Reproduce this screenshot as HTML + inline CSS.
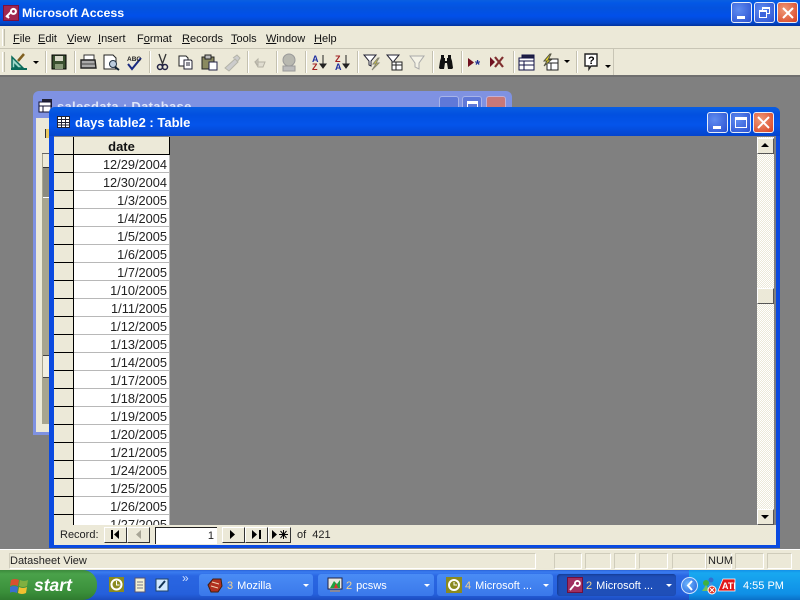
<!DOCTYPE html>
<html><head><meta charset="utf-8"><style>
*{box-sizing:border-box}
html,body{margin:0;padding:0;width:800px;height:600px;overflow:hidden;background:#808080;font-family:"Liberation Sans",sans-serif;font-size:11.5px;color:#000}
.a{position:absolute}
#tb{left:0;top:0;width:800px;height:26px;background:linear-gradient(#0a5fe0 0,#0358e6 3px,#0453dd 8px,#0150ea 16px,#0346c8 23px,#02329c 26px)}
.tt{color:#fff;font-weight:bold;white-space:nowrap}
.wb{border:1px solid #e8eef8;border-radius:3px;background:radial-gradient(circle at 35% 35%,#5f8cf0,#2a50d0)}
.wb.r{background:radial-gradient(circle at 35% 35%,#ef9a78,#d84020)}
.m{top:33px;white-space:nowrap;font-size:11px;color:#111}
.m u{text-decoration:underline}
.sep{background:#c4c1b0;border-right:1px solid #fff;width:2px;top:51px;height:22px}
.row{left:54px;width:116px;height:18px}
.sel{position:absolute;left:0;top:0;width:20px;height:18px;background:#ece9d8;border-bottom:1px solid #000;border-right:1px solid #000}
.cell{position:absolute;left:20px;top:0;width:96px;height:18px;background:#fff;border-bottom:1px solid #b8b8b8;border-right:1px solid #b8b8b8;text-align:right;padding-right:2px;line-height:20px;font-size:12.8px;color:#222;overflow:hidden}
.nb{top:527px;height:16px;width:23px;background:#ece9d8;border-bottom:1px solid #333;border-right:1px solid #333;border-top:1px solid #fff;border-left:1px solid #fff}
.sb{top:553px;height:16px;border:1px solid #cfccbb;border-right-color:#fff;border-bottom-color:#fff}
.tk{top:574px;height:22px;border-radius:3px;background:linear-gradient(#4a8cf5,#3a78ea);color:#fff;font-size:11px;line-height:24px;white-space:nowrap}
.tk span{position:absolute;left:28px}
.tk b{font-weight:normal;color:#f0d090;margin-right:1px}
.tk i{position:absolute;right:4px;top:10px;width:0;height:0;border:3px solid transparent;border-top:3px solid #fff;border-bottom:0}
</style></head><body>

<div class="a" id="tb"></div>
<svg class="a" style="left:3px;top:5px" width="16" height="16"><rect width="16" height="16" fill="#7a1040"/><rect x="1" y="1" width="14" height="14" fill="#a02850"/><path d="M3 12l5-5M8 7a2.500 2.500 0 1 0 3-3 2.500 2.500 0 0 0-3 3M4 11l2 2" stroke="#fff" stroke-width="2" fill="none"/></svg>
<div class="a tt" style="left:22px;top:5px;font-size:12.4px;line-height:16px">Microsoft Access</div>
<div class="a wb" style="left:731px;top:2px;width:21px;height:21px"><div class="a" style="left:5px;top:13px;width:8px;height:3px;background:#fff"></div></div>
<div class="a wb" style="left:754px;top:2px;width:21px;height:21px"><div class="a" style="left:7px;top:4px;width:8px;height:7px;border:1px solid #fff;border-top-width:2px"></div><div class="a" style="left:4px;top:7px;width:8px;height:8px;border:1px solid #fff;border-top-width:2px;background:#3d66dc"></div></div>
<div class="a wb r" style="left:777px;top:2px;width:21px;height:21px"><svg class="a" style="left:4px;top:4px" width="12" height="12"><path d="M1 1l10 10M11 1L1 11" stroke="#fff" stroke-width="2"/></svg></div>

<div class="a" style="left:0;top:26px;width:800px;height:49px;background:#ece9d8"></div>
<div class="a" style="left:0;top:48px;width:800px;height:1px;background:#c8c5b5"></div>
<div class="a" style="left:2px;top:29px;width:3px;height:17px;border-left:1px solid #fff;border-right:1px solid #c0bdac;background:#e4e1d0"></div>
<div class="a m" style="left:13px"><u>F</u>ile</div>
<div class="a m" style="left:38px"><u>E</u>dit</div>
<div class="a m" style="left:67px"><u>V</u>iew</div>
<div class="a m" style="left:98px"><u>I</u>nsert</div>
<div class="a m" style="left:137px">F<u>o</u>rmat</div>
<div class="a m" style="left:182px"><u>R</u>ecords</div>
<div class="a m" style="left:231px"><u>T</u>ools</div>
<div class="a m" style="left:266px"><u>W</u>indow</div>
<div class="a m" style="left:314px"><u>H</u>elp</div>

<!-- toolbar -->
<div class="a" style="left:0;top:49px;width:614px;height:26px;background:#ece9d8;border-right:1px solid #c8c5b5"></div>
<div class="a" style="left:0;top:75px;width:800px;height:2px;background:#6f6f6f"></div>
<div class="a" style="left:2px;top:52px;width:3px;height:20px;border-left:1px solid #fff;border-right:1px solid #c0bdac"></div>
<div class="a sep" style="left:45px"></div><div class="a sep" style="left:74px"></div><div class="a sep" style="left:149px"></div><div class="a sep" style="left:247px"></div><div class="a sep" style="left:276px"></div><div class="a sep" style="left:305px"></div><div class="a sep" style="left:357px"></div><div class="a sep" style="left:432px"></div><div class="a sep" style="left:461px"></div><div class="a sep" style="left:513px"></div><div class="a sep" style="left:576px"></div>
<svg class="a" style="left:0;top:49px" width="620" height="26" fill="none">
 <!-- design -->
 <path d="M12 19V8l11 11z M15 16v2h2z" stroke="#0a6a5a" stroke-width="1.500" fill="#9fd8c8"/><path d="M11 20h16" stroke="#0a6a5a" stroke-width="2"/><path d="M18 12l6-7" stroke="#806020" stroke-width="2.500"/>
 <path d="M33 12h6l-3 3z" fill="#000"/>
 <!-- save -->
 <rect x="52" y="6" width="14" height="14" fill="#3a5030" stroke="#000"/><rect x="55" y="7" width="8" height="5" fill="#d8d8c8"/><rect x="55" y="15" width="8" height="5" fill="#889878"/>
 <!-- print -->
 <path d="M84 6h10v5H84z" fill="#fff" stroke="#333"/><path d="M81 11h14l1 8H81z" fill="#aaa" stroke="#222" stroke-width="1.400"/><path d="M82 15h13" stroke="#444"/>
 <!-- preview -->
 <path d="M104 6h9l3 3v11h-12z" fill="#fff" stroke="#222"/><circle cx="113" cy="15" r="3.500" fill="#bcd" stroke="#234"/><path d="M115 18l4 3" stroke="#123" stroke-width="2"/>
 <!-- spell -->
 <path d="M128 15l4 5 9-11" stroke="#1a2a80" stroke-width="2"/>
 <text x="127" y="12" font-family="Liberation Sans" font-size="6.500" font-weight="bold" fill="#222">ABC</text>
 <!-- cut -->
 <path d="M159 5l4 11M166 5l-4 11" stroke="#333" stroke-width="1.300"/><circle cx="160" cy="18" r="2.500" stroke="#224" stroke-width="1.500"/><circle cx="165" cy="18" r="2.500" stroke="#224" stroke-width="1.500"/>
 <!-- copy -->
 <path d="M179 7h7l2 2v8h-9z" fill="#fff" stroke="#222"/><path d="M184 11h7l1 1v8h-8z" fill="#fff" stroke="#223"/><path d="M186 14h4M186 16h4" stroke="#223"/>
 <!-- paste -->
 <rect x="202" y="8" width="12" height="12" fill="#8a8a60" stroke="#222"/><rect x="205" y="6" width="6" height="4" fill="#bbb" stroke="#222"/><rect x="209" y="13" width="8" height="8" fill="#fff" stroke="#224"/>
 <!-- painter -->
 <path d="M225 19l10-9 3 3-9 9zM233 9l4-3 3 3-3 4" fill="#ccc" stroke="#b4b4a8"/>
 <!-- undo -->
 <path d="M255 13h10l-2 5h-5zM255 13l3-3v6z" fill="#e0ddd0" stroke="#b4b1a4"/>
 <!-- web -->
 <circle cx="289" cy="11" r="6" fill="#b8b8b0" stroke="#999"/><path d="M283 17h12v5h-12z" fill="#bbb" stroke="#999"/>
 <!-- AZ -->
 <text x="312" y="13" font-family="Liberation Sans" font-size="9" font-weight="bold" fill="#2030a0">A</text><text x="312" y="21" font-family="Liberation Sans" font-size="9" font-weight="bold" fill="#a02020">Z</text><path d="M323 6v12M320 15l3 4 3-4z" stroke="#222" fill="#222"/>
 <text x="335" y="13" font-family="Liberation Sans" font-size="9" font-weight="bold" fill="#a02020">Z</text><text x="335" y="21" font-family="Liberation Sans" font-size="9" font-weight="bold" fill="#2030a0">A</text><path d="M346 6v12M343 15l3 4 3-4z" stroke="#222" fill="#222"/>
 <!-- filters -->
 <path d="M364 6h12l-5 6v5l-2-1v-4z" fill="#fff" stroke="#223"/><path d="M378 9l-5 6h3l-4 6 7-7h-3l3-5z" fill="#f0e020" stroke="#887"/>
 <path d="M387 6h12l-5 6v3h-2v-3z" fill="#fff" stroke="#223"/><rect x="392" y="13" width="10" height="8" fill="#fff" stroke="#222"/><path d="M392 16h10M396 13v8" stroke="#222"/>
 <path d="M410 7h14l-5 7v6l-4-2v-4z" fill="#f4f2e6" stroke="#aaa"/>
 <!-- find -->
 <path d="M441 6h3v3h1v3h2V9h1V6h3v3l1 3 1 7-1 1h-4l-1-6h-2l-1 6h-4l-1-1 1-7 1-3z" fill="#111"/>
 <!-- new rec -->
 <path d="M468 9l6 4.500-6 4.500z" fill="#701020"/><text x="475" y="20" font-family="Liberation Sans" font-size="13" font-weight="bold" fill="#1a2a90">*</text>
 <path d="M490 8l5 5-5 5z" fill="#701020"/><path d="M495 8l8 10M503 8l-8 10" stroke="#803030" stroke-width="2.200"/>
 <!-- db win -->
 <rect x="522" y="6" width="12" height="8" fill="#224" stroke="#114"/><rect x="519" y="9" width="15" height="12" fill="#fff" stroke="#114"/><path d="M519 12h15M524 12v9M519 16h15" stroke="#114"/>
 <!-- new obj -->
 <rect x="547" y="10" width="11" height="11" fill="#fff" stroke="#222"/><path d="M547 14h11M551 14v7" stroke="#222"/><path d="M550 5l-6 7h3l-3 5 7-6h-3l3-6z" fill="#f4e020" stroke="#554"/>
 <path d="M564 11h6l-3 3z" fill="#000"/>
 <!-- help -->
 <path d="M585 5h12v12h-6l-2 3v-3h-4z" fill="#fff" stroke="#222" stroke-width="1.400"/>
 <text x="588" y="15" font-family="Liberation Sans" font-size="11" font-weight="bold" fill="#000">?</text>
 <path d="M605 16h6l-3 3z" fill="#000"/>
</svg>

<!-- back window -->
<div class="a" style="left:33px;top:91px;width:479px;height:344px;background:#7f92e2;border-radius:6px 6px 0 0"></div>
<div class="a" style="left:36px;top:118px;width:16px;height:314px;background:#ece9d8"></div>
<div class="a" style="left:42px;top:153px;width:8px;height:271px;background:#a8a590"></div>
<div class="a" style="left:42px;top:153px;width:8px;height:1px;background:#666"></div>
<div class="a" style="left:43px;top:154px;width:7px;height:13px;background:#ece9d8"></div>
<div class="a" style="left:43px;top:167px;width:6px;height:31px;background:#8b8b80;border-top:1px solid #333;border-bottom:1px solid #fff"></div>
<div class="a" style="left:43px;top:355px;width:7px;height:1px;background:#444"></div>
<div class="a" style="left:43px;top:356px;width:7px;height:21px;background:#f0eee0"></div>
<div class="a" style="left:43px;top:377px;width:7px;height:1px;background:#444"></div>
<div class="a" style="left:45px;top:129px;width:5px;height:9px;background:#e8c860;border-left:1px solid #333"></div>
<svg class="a" style="left:38px;top:98px" width="16" height="16"><rect x="4" y="1" width="10" height="8" fill="#223"/><rect x="1" y="4" width="12" height="10" fill="#fff" stroke="#113"/><path d="M1 8h12M5 8v6" stroke="#113"/></svg>
<div class="a tt" style="left:57px;top:99px;font-size:13px;line-height:16px;color:#dfe6fa;letter-spacing:.3px">salesdata : Database</div>
<div class="a wb" style="left:439px;top:96px;width:20px;height:20px;background:#5f78d8;border-color:#a8b4e8"></div>
<div class="a wb" style="left:462px;top:96px;width:20px;height:20px;background:#5f78d8;border-color:#a8b4e8"><div class="a" style="left:4px;top:4px;width:11px;height:11px;border:1px solid #fff;border-top-width:3px"></div></div>
<div class="a wb" style="left:486px;top:96px;width:20px;height:20px;background:#c87878;border-color:#c0b0d8"></div>

<!-- front window -->
<div class="a" style="left:49px;top:107px;width:731px;height:441px;background:#0a4ae0;border-radius:6px 6px 0 0"></div>
<div class="a" style="left:49px;top:107px;width:731px;height:29px;border-radius:6px 6px 0 0;background:linear-gradient(#0a5ee2 0,#0250e0 8px,#0454ea 18px,#0444cc 29px)"></div>
<svg class="a" style="left:57px;top:116px" width="13" height="13"><rect x=".5" y=".5" width="12" height="11" fill="#fff" stroke="#223"/><path d="M.5 3.500h12M.5 6.500h12M.5 9h12M4.500 .5v11M8.500 .5v11" stroke="#223"/></svg>
<div class="a tt" style="left:75px;top:115px;font-size:13px;line-height:16px">days table2 : Table</div>
<div class="a wb" style="left:707px;top:112px;width:21px;height:21px"><div class="a" style="left:5px;top:13px;width:8px;height:3px;background:#fff"></div></div>
<div class="a wb" style="left:730px;top:112px;width:21px;height:21px"><div class="a" style="left:4px;top:4px;width:12px;height:11px;border:1px solid #fff;border-top-width:3px"></div></div>
<div class="a wb r" style="left:753px;top:112px;width:21px;height:21px"><svg class="a" style="left:3px;top:3px" width="13" height="13"><path d="M1 1l11 11M12 1L1 12" stroke="#fff" stroke-width="2"/></svg></div>

<div class="a" style="left:54px;top:136px;width:722px;height:409px;background:#808080"></div>
<div class="a" style="left:54px;top:137px;width:20px;height:18px;background:#ece9d8;border-bottom:1px solid #000;border-right:1px solid #000"></div>
<div class="a" style="left:74px;top:137px;width:96px;height:18px;background:#ece9d8;border-bottom:1px solid #000;border-right:1px solid #000;text-align:center;font-weight:bold;font-size:13px;line-height:19px;color:#111">date</div>

<div class="a row" style="top:155px"><div class="sel"></div><div class="cell">12/29/2004</div></div>
<div class="a row" style="top:173px"><div class="sel"></div><div class="cell">12/30/2004</div></div>
<div class="a row" style="top:191px"><div class="sel"></div><div class="cell">1/3/2005</div></div>
<div class="a row" style="top:209px"><div class="sel"></div><div class="cell">1/4/2005</div></div>
<div class="a row" style="top:227px"><div class="sel"></div><div class="cell">1/5/2005</div></div>
<div class="a row" style="top:245px"><div class="sel"></div><div class="cell">1/6/2005</div></div>
<div class="a row" style="top:263px"><div class="sel"></div><div class="cell">1/7/2005</div></div>
<div class="a row" style="top:281px"><div class="sel"></div><div class="cell">1/10/2005</div></div>
<div class="a row" style="top:299px"><div class="sel"></div><div class="cell">1/11/2005</div></div>
<div class="a row" style="top:317px"><div class="sel"></div><div class="cell">1/12/2005</div></div>
<div class="a row" style="top:335px"><div class="sel"></div><div class="cell">1/13/2005</div></div>
<div class="a row" style="top:353px"><div class="sel"></div><div class="cell">1/14/2005</div></div>
<div class="a row" style="top:371px"><div class="sel"></div><div class="cell">1/17/2005</div></div>
<div class="a row" style="top:389px"><div class="sel"></div><div class="cell">1/18/2005</div></div>
<div class="a row" style="top:407px"><div class="sel"></div><div class="cell">1/19/2005</div></div>
<div class="a row" style="top:425px"><div class="sel"></div><div class="cell">1/20/2005</div></div>
<div class="a row" style="top:443px"><div class="sel"></div><div class="cell">1/21/2005</div></div>
<div class="a row" style="top:461px"><div class="sel"></div><div class="cell">1/24/2005</div></div>
<div class="a row" style="top:479px"><div class="sel"></div><div class="cell">1/25/2005</div></div>
<div class="a row" style="top:497px"><div class="sel"></div><div class="cell">1/26/2005</div></div>
<div class="a" style="left:54px;top:515px;width:116px;height:10px;overflow:hidden"><div class="sel"></div><div class="cell">1/27/2005</div></div>

<!-- scrollbar -->
<div class="a" style="left:757px;top:137px;width:17px;height:388px;background-color:#f4f2ea;background-image:repeating-conic-gradient(#ece9d8 0 25%,#fff 0 50%);background-size:2px 2px"></div>
<div class="a" style="left:757px;top:138px;width:17px;height:16px;background:#ece9d8;border:1px solid;border-color:#fff #555 #555 #fff"><div class="a" style="left:3px;top:4px;border:4px solid transparent;border-top:0;border-bottom:4px solid #000;width:0;height:0"></div></div>
<div class="a" style="left:757px;top:288px;width:17px;height:16px;background:#ece9d8;border:1px solid;border-color:#fff #555 #555 #fff"></div>
<div class="a" style="left:757px;top:509px;width:17px;height:16px;background:#ece9d8;border:1px solid;border-color:#fff #555 #555 #fff"><div class="a" style="left:3px;top:5px;border:4px solid transparent;border-bottom:0;border-top:4px solid #000;width:0;height:0"></div></div>

<!-- record nav -->
<div class="a" style="left:54px;top:525px;width:722px;height:20px;background:#ece9d8"></div>
<div class="a" style="left:60px;top:528px;font-size:11px;line-height:14px;color:#222">Record:</div>
<div class="a nb" style="left:104px"></div>
<div class="a nb" style="left:127px"></div>
<div class="a" style="left:155px;top:527px;width:62px;height:17px;background:#fff;border-top:1px solid #222;border-left:1px solid #222;text-align:right;padding-right:3px;font-size:11px;line-height:17px;color:#222">1</div>
<div class="a nb" style="left:222px"></div>
<div class="a nb" style="left:245px"></div>
<div class="a nb" style="left:268px"></div>
<svg class="a" style="left:104px;top:527px" width="190" height="16">
 <path d="M7 3h2v9H7zM15 3v9l-5-4.500z" fill="#000"/>
 <path d="M37 3v9l-5-4.500z" fill="#a8a596"/>
 <path d="M126 3v9l5-4.500z" fill="#000"/>
 <path d="M148 3v9l5-4.500zM155 3h2v9h-2z" fill="#000"/>
 <path d="M168 3v9l5-4.500z" fill="#000"/><path d="M175 7.500h9M179.500 3v9M176.500 4l6 7M182.500 4l-6 7" stroke="#000" stroke-width="1"/>
</svg>
<div class="a" style="left:297px;top:528px;font-size:11px;line-height:14px;color:#222">of&nbsp; 421</div>

<!-- status bar -->
<div class="a" style="left:0;top:549px;width:800px;height:21px;background:#ece9d8"></div>
<div class="a" style="left:0;top:549px;width:800px;height:1px;background:#fff"></div>
<div class="a sb" style="left:9px;width:527px;font-size:11px;line-height:14px;color:#222;padding-left:0">Datasheet View</div>
<div class="a sb" style="left:554px;width:28px"></div>
<div class="a sb" style="left:585px;width:26px"></div>
<div class="a sb" style="left:614px;width:22px"></div>
<div class="a sb" style="left:639px;width:29px"></div>
<div class="a sb" style="left:672px;width:34px"></div>
<div class="a sb" style="left:706px;width:26px;font-size:11px;line-height:14px;color:#222;padding-left:1px">NUM</div>
<div class="a sb" style="left:735px;width:29px"></div>
<div class="a sb" style="left:767px;width:25px"></div>

<!-- taskbar -->
<div class="a" style="left:0;top:570px;width:800px;height:30px;background:linear-gradient(#2a62d8 0,#3a7cf0 2px,#2a66e2 6px,#2560dc 24px,#1c4cc0 30px)"></div>
<div class="a" style="left:0;top:570px;width:97px;height:30px;background:linear-gradient(#3c8a3c 0,#4aa24a 4px,#3a8f3a 22px,#2f7a2f 30px);border-radius:0 14px 14px 0"></div>
<svg class="a" style="left:10px;top:576px" width="20" height="18"><path d="M1 4q4-2 8 0l-1 6q-4-2-8 0z" fill="#d85030"/><path d="M10 4q4 2 8 0l-1 6q-4 2-8 0z" fill="#80b040"/><path d="M0 11q4-2 8 0l-1 6q-4-2-8 0z" fill="#3a6fd0"/><path d="M9 11q4 2 8 0l-1 6q-4 2-8 0z" fill="#f0c030"/></svg>
<div class="a" style="left:34px;top:575px;color:#fff;font-weight:bold;font-style:italic;font-size:17.500px;line-height:20px">start</div>

<svg class="a" style="left:108px;top:576px" width="66" height="18">
 <rect x="1" y="1" width="15" height="15" fill="#8a8a20"/><circle cx="8.500" cy="8.500" r="5" fill="none" stroke="#fff" stroke-width="2"/><path d="M8.500 5v4h3" stroke="#fff" fill="none"/>
 <rect x="27" y="2" width="10" height="14" fill="#f4f0d0" stroke="#557"/><path d="M29 6h6M29 9h6M29 12h6" stroke="#778"/>
 <rect x="48" y="3" width="12" height="12" fill="#d0e8ff" stroke="#246"/><path d="M51 12l6-7" stroke="#135" stroke-width="2"/>
</svg>
<div class="a" style="left:182px;top:572px;color:#cfe0ff;font-size:12px;line-height:12px">»</div>

<div class="a tk" style="left:199px;width:114px"><svg class="a" style="left:8px;top:3px" width="16" height="16"><path d="M1 8l5-6h8l1 7-4 6H4z" fill="#b03020" stroke="#402010"/><path d="M5 5l7 2M4 9l7 2" stroke="#f0d0b0"/></svg><span><b>3</b> Mozilla</span><i></i></div>
<div class="a tk" style="left:318px;width:116px"><svg class="a" style="left:9px;top:3px" width="16" height="16"><rect x="1" y="1" width="14" height="11" fill="#e8e8e0" stroke="#224"/><path d="M3 11l4-7 3 3 3-4v8z" fill="#20a040"/><path d="M7 11l2-5 2 5z" fill="#e03030"/><rect x="3" y="13" width="10" height="2" fill="#889"/></svg><span><b>2</b> pcsws</span><i></i></div>
<div class="a tk" style="left:437px;width:116px"><svg class="a" style="left:9px;top:3px" width="16" height="16"><rect width="16" height="16" fill="#8a8a20"/><circle cx="8" cy="8" r="5" fill="none" stroke="#fff" stroke-width="2"/><path d="M8 5v3h3" stroke="#fff" fill="none"/></svg><span><b>4</b> Microsoft ...</span><i></i></div>
<div class="a tk" style="left:557px;width:119px;background:#1f4fb8;box-shadow:inset 1px 1px 2px #143a90"><svg class="a" style="left:10px;top:3px" width="16" height="16"><rect width="16" height="16" fill="#701040"/><rect x="1" y="1" width="14" height="14" fill="#a03060"/><path d="M3 13l5-6M8 7a2.500 2.500 0 1 0 3-3 2.500 2.500 0 0 0-3 3" stroke="#fff" stroke-width="1.800" fill="none"/></svg><span style="left:29px"><b>2</b> Microsoft ...</span><i></i></div>

<div class="a" style="left:689px;top:570px;width:111px;height:30px;background:linear-gradient(#1290e8 0,#18a8f0 3px,#0f8fe6 24px,#0a70c8 30px)"></div>
<div class="a" style="left:681px;top:577px;width:17px;height:17px;border-radius:50%;background:radial-gradient(circle at 40% 40%,#70b8ff,#1f5cd8);border:1px solid #cfe4ff"><svg class="a" style="left:3px;top:2px" width="9" height="11"><path d="M7 1L3 5.500 7 10" stroke="#fff" stroke-width="2" fill="none"/></svg></div>
<svg class="a" style="left:700px;top:576px" width="38" height="20">
 <circle cx="6" cy="7" r="3" fill="#40b040"/><circle cx="11" cy="4" r="2.500" fill="#3070d0"/><path d="M2 15l4-6 4 6z" fill="#70c060"/><path d="M8 10l3-4 3 5z" fill="#4090e0"/>
 <circle cx="12" cy="14" r="4" fill="#e03020" stroke="#fff"/><path d="M10 12l4 4M14 12l-4 4" stroke="#fff"/>
 <path d="M18 15l5-12h12v12z" fill="#e01818" stroke="#fff" stroke-width=".7"/>
 <text x="22" y="13" font-family="Liberation Sans" font-size="9" font-weight="bold" fill="#fff">ATI</text>
</svg>
<div class="a" style="left:743px;top:579px;color:#fff;font-size:11px;line-height:14px">4:55 PM</div>
</body></html>
